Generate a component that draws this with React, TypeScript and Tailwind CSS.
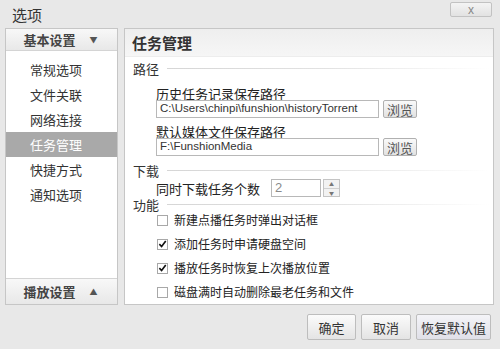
import React from "react";

const CJK = "font-['Microsoft_YaHei','Noto_Sans_CJK_SC',sans-serif]";

const NAV_ITEMS = ["常规选项", "文件关联", "网络连接", "任务管理", "快捷方式", "通知选项"];

const OPTIONS = [
  { label: "新建点播任务时弹出对话框", checked: false },
  { label: "添加任务时申请硬盘空间", checked: true },
  { label: "播放任务时恢复上次播放位置", checked: true },
  { label: "磁盘满时自动删除最老任务和文件", checked: false },
];

function SectionTitle({ title, className }: { title: string; className?: string }) {
  return (
    <div className={`flex items-center pl-[8px] pr-[4px] ${className ?? ""}`}>
      <span className="text-[13px] text-[#333] leading-none">{title}</span>
      <div className="ml-[8px] h-px flex-1 bg-gradient-to-r from-[#d6d6d6] via-[#e2e2e2] to-white" />
    </div>
  );
}

function PathField({ value }: { value: string }) {
  return (
    <div className="flex h-[18px] items-center pl-[31px]">
      <div className="flex h-[18px] w-[223px] items-center border border-[#b8b8b8] bg-white px-[3px] font-['Liberation_Sans',sans-serif] text-[11.5px] text-[#333]">
        {value}
      </div>
      <button
        type="button"
        className="ml-[4px] flex h-[18px] w-[34px] items-center justify-center rounded-[2px] border border-[#b0b0b0] bg-gradient-to-b from-[#fafafa] to-[#e2e2e2] text-[13px] leading-none text-[#555]"
      >
        浏览
      </button>
    </div>
  );
}

function CheckBox({ checked }: { checked: boolean }) {
  return (
    <div className="flex h-[11px] w-[11px] items-center justify-center border border-[#a8a8a8] bg-white">
      {checked && (
        <svg viewBox="0 0 10 10" className="h-[10px] w-[10px]">
          <path d="M1.5 5.2 L4 7.8 L8.6 1.6" fill="none" stroke="#111" strokeWidth="1.8" />
        </svg>
      )}
    </div>
  );
}

export default function App() {
  return (
    <div className={`flex h-[349px] w-[500px] flex-col bg-[#e8e8e8] ${CJK}`}>
      {/* Title bar */}
      <div className="flex h-[28px] items-start justify-between">
        <span className="pl-[12px] pt-[7px] text-[15px] leading-none text-[#333]">选项</span>
        <button
          type="button"
          className="mr-[8px] mt-[2px] flex h-[15px] w-[42px] items-center justify-center rounded-[2px] border border-[#c2c2c2] bg-gradient-to-b from-[#f4f4f4] to-[#e2e2e2] font-['Liberation_Sans',sans-serif] text-[12px] leading-none text-[#888]"
        >
          x
        </button>
      </div>

      {/* Body */}
      <div className="flex h-[277px] gap-[6px] px-[5px]">
        {/* Left nav */}
        <div className="flex w-[113px] flex-col border border-[#c6c6c6] bg-white">
          <div className="flex h-[22px] items-center justify-center gap-[14px] border-b border-[#d4d4d4] bg-gradient-to-b from-[#f8f8f8] to-[#e8e8e8] pr-[2px]">
            <span className="text-[13px] font-bold leading-none text-[#444]">基本设置</span>
            <span className="text-[8px] leading-none text-[#555]">▼</span>
          </div>
          <div className="flex flex-col pt-[6px]">
            {NAV_ITEMS.map((item) => (
              <div
                key={item}
                className={`flex h-[25px] items-center pl-[24px] text-[13px] leading-none ${
                  item === "任务管理" ? "bg-[#a9a9a9] text-white" : "text-[#333]"
                }`}
              >
                {item}
              </div>
            ))}
          </div>
          <div className="flex-1" />
          <div className="flex h-[26px] items-center justify-center gap-[14px] border-t border-[#d4d4d4] bg-gradient-to-b from-[#f8f8f8] to-[#e8e8e8] pr-[2px]">
            <span className="text-[13px] font-bold leading-none text-[#444]">播放设置</span>
            <span className="text-[8px] leading-none text-[#555]">▲</span>
          </div>
        </div>

        {/* Right panel */}
        <div className="flex w-[370px] flex-col border border-[#c6c6c6] bg-white">
          <div className="flex h-[28px] items-center border-b border-[#ededed] bg-gradient-to-b from-[#eeeeee] to-[#f6f6f6] pl-[7px]">
            <span className="text-[15px] font-bold leading-none text-[#333]">任务管理</span>
          </div>

          <SectionTitle title="路径" className="h-[22px]" />
          <div className="mt-[7px] flex h-[14px] items-center pl-[31px] text-[13px] leading-none text-[#222]">
            历史任务记录保存路径
          </div>
          <PathField value="C:\Users\chinpi\funshion\historyTorrent" />
          <div className="mt-[6px] flex h-[14px] items-center pl-[31px] text-[13px] leading-none text-[#222]">
            默认媒体文件保存路径
          </div>
          <PathField value="F:\FunshionMedia" />

          <SectionTitle title="下载" className="mt-[6px] h-[16px]" />
          <div className="mt-[1px] flex h-[18px] items-center pl-[31px]">
            <span className="w-[115px] text-[13px] leading-none text-[#222]">同时下载任务个数</span>
            <div className="flex h-[18px] w-[50px] items-center border border-[#b8b8b8] bg-white px-[3px] font-['Liberation_Sans',sans-serif] text-[13px] text-[#8a8a8a]">
              2
            </div>
            <div className="ml-[2px] flex h-[18px] w-[17px] flex-col border border-[#c4c4c4] bg-[#f2f2f2]">
              <div className="flex flex-1 items-center justify-center border-b border-[#d0d0d0] text-[5px] leading-none text-[#777]">▲</div>
              <div className="flex flex-1 items-center justify-center text-[5px] leading-none text-[#777]">▼</div>
            </div>
          </div>

          <SectionTitle title="功能" className="h-[14px]" />
          <div className="-mt-[3px] flex flex-col">
            {OPTIONS.map((opt) => (
              <div key={opt.label} className="flex h-[24px] items-center pl-[32px]">
                <CheckBox checked={opt.checked} />
                <span className="ml-[6px] text-[12px] leading-none text-[#222]">{opt.label}</span>
              </div>
            ))}
          </div>
        </div>
      </div>

      {/* Footer */}
      <div className="flex justify-end gap-[5px] pr-[9px] pt-[9px]">
        <button
          type="button"
          className="flex h-[26px] w-[49px] items-center justify-center rounded-[2px] border border-[#bdbdbd] bg-gradient-to-b from-[#fbfbfb] to-[#e4e4e4] text-[13px] leading-none text-[#333]"
        >
          确定
        </button>
        <button
          type="button"
          className="flex h-[26px] w-[50px] items-center justify-center rounded-[2px] border border-[#bdbdbd] bg-gradient-to-b from-[#fbfbfb] to-[#e4e4e4] text-[13px] leading-none text-[#333]"
        >
          取消
        </button>
        <button
          type="button"
          className="flex h-[26px] w-[75px] items-center justify-center rounded-[2px] border border-[#bdbdbd] bg-gradient-to-b from-[#f4f4f8] to-[#e0e0e8] text-[13px] leading-none text-[#333]"
        >
          恢复默认值
        </button>
      </div>
    </div>
  );
}
